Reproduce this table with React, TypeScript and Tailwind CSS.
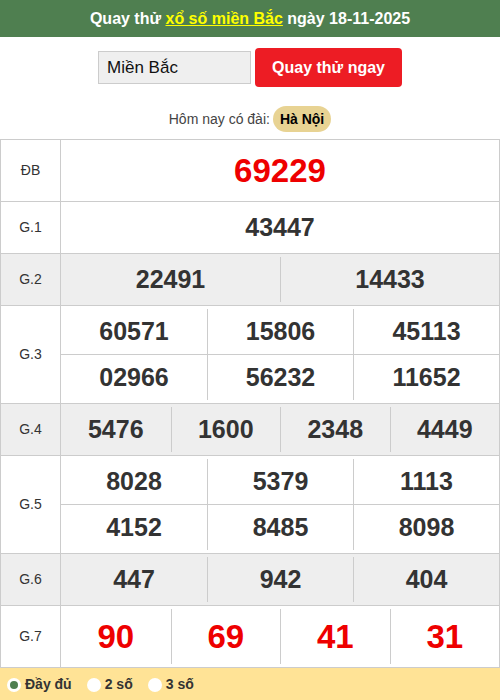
import React from "react";

type Row = {
  label: string;
  nums: string[][]; // sub-rows of numbers
  red?: boolean;
  big?: boolean;
  shaded?: boolean;
};

const ROWS: Row[] = [
  { label: "ĐB", nums: [["69229"]], red: true, big: true },
  { label: "G.1", nums: [["43447"]] },
  { label: "G.2", nums: [["22491", "14433"]], shaded: true },
  { label: "G.3", nums: [["60571", "15806", "45113"], ["02966", "56232", "11652"]] },
  { label: "G.4", nums: [["5476", "1600", "2348", "4449"]], shaded: true },
  { label: "G.5", nums: [["8028", "5379", "1113"], ["4152", "8485", "8098"]] },
  { label: "G.6", nums: [["447", "942", "404"]], shaded: true },
  { label: "G.7", nums: [["90", "69", "41", "31"]], red: true, big: true },
];

const GRID: Record<number, string> = {
  1: "grid-cols-1",
  2: "grid-cols-2",
  3: "grid-cols-3",
  4: "grid-cols-4",
};

function PrizeRow({ row }: { row: Row }) {
  const cols = row.nums[0].length;
  return (
    <div className={`flex border-t border-[#ccc] ${row.shaded ? "bg-[#eeeeee]" : "bg-white"}`}>
      <div className="w-[60px] shrink-0 border-r border-[#ccc] flex items-center justify-center text-[14px] text-[#333]">
        {row.label}
      </div>
      <div className="flex-1 py-[3px]">
        {row.nums.map((line, i) => (
          <div
            key={i}
            className={`grid ${GRID[cols]} ${i < row.nums.length - 1 ? "border-b border-[#ccc]" : ""}`}
          >
            {line.map((n, j) => (
              <div
                key={j}
                className={`flex items-center justify-center font-bold ${
                  row.big ? "h-[55px] text-[33px]" : "h-[45px] text-[25px]"
                } ${row.red ? "text-[#ee0000]" : "text-[#333]"} ${j > 0 ? "border-l border-[#ccc]" : ""}`}
              >
                {n}
              </div>
            ))}
          </div>
        ))}
      </div>
    </div>
  );
}

function Radio({ label, checked }: { label: string; checked?: boolean }) {
  return (
    <label className="flex items-center gap-[4px]">
      <span className="w-[14px] h-[14px] rounded-full bg-white flex items-center justify-center">
        {checked && <span className="w-[8px] h-[8px] rounded-full bg-[#4f7f50]" />}
      </span>
      <span className="text-[14px] font-bold text-[#333]">{label}</span>
    </label>
  );
}

export default function App() {
  return (
    <div className="w-[500px] h-[700px] bg-white font-['Liberation_Sans',Arial,sans-serif] overflow-hidden">
      <div className="h-[37px] bg-[#4f7f50] flex items-center justify-center text-white font-bold text-[16px]">
        <span>
          Quay thử <a className="text-[#ffff00] underline">xổ số miền Bắc</a> ngày 18-11-2025
        </span>
      </div>

      <div className="mt-[11px] flex items-center justify-center gap-[4px]">
        <div className="w-[153px] h-[33px] bg-[#efefef] border border-[#ccc] flex items-center pl-[8px] text-[17px] text-[#111]">
          Miền Bắc
        </div>
        <button className="h-[39px] px-[17px] rounded-[4px] bg-[#ed1c24] text-white font-bold text-[16px]">
          Quay thử ngay
        </button>
      </div>

      <div className="mt-[19px] h-[26px] flex items-center justify-center gap-[3px] text-[14px] text-[#444]">
        <span>Hôm nay có đài:</span>
        <span className="h-[26px] px-[7px] rounded-full bg-[#e8d393] flex items-center font-bold text-black">
          Hà Nội
        </span>
      </div>

      <div className="mt-[7px] border-x border-b border-[#ccc]">
        {ROWS.map((r) => (
          <PrizeRow key={r.label} row={r} />
        ))}
      </div>

      <div className="h-[33px] bg-[#ffe396] flex items-center pl-[7px] gap-[15px]">
        <Radio label="Đầy đủ" checked />
        <Radio label="2 số" />
        <Radio label="3 số" />
      </div>
    </div>
  );
}
